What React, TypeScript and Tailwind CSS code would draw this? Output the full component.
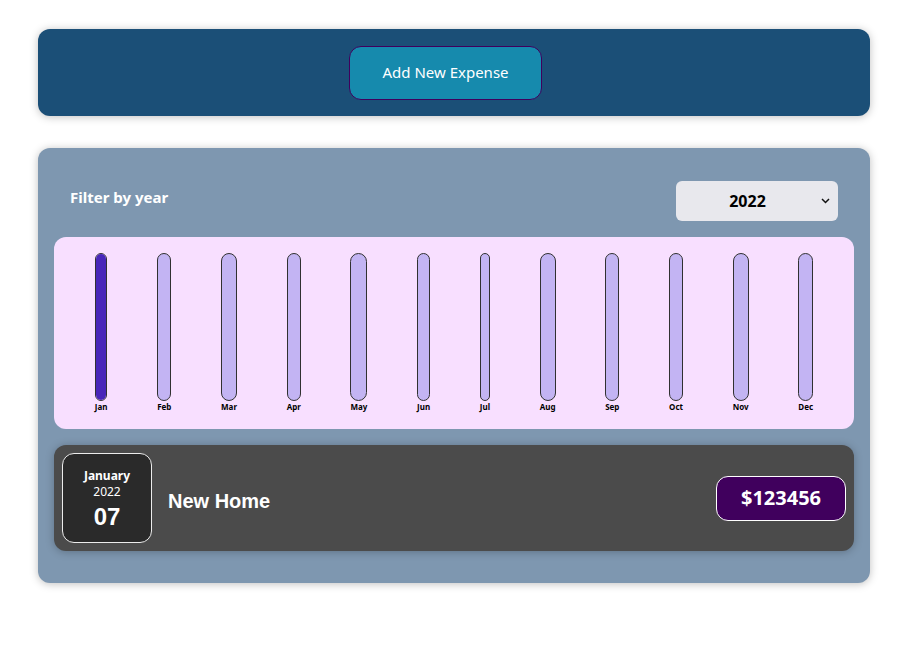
import React from "react";

const months = ["Jan","Feb","Mar","Apr","May","Jun","Jul","Aug","Sep","Oct","Nov","Dec"];

export default function App() {
  return (
    <div className="min-h-[666px] bg-white pt-[29px] font-['Noto_Sans','Open_Sans',sans-serif]">
      <div className="ml-[38px] flex h-[87px] w-[832px] items-center justify-center rounded-[12px] bg-[#1b4f77] shadow-[0_1px_8px_rgba(0,0,0,0.25)]">
        <button className="mr-[17px] h-[54px] w-[193px] rounded-[12px] border border-[#40005d] bg-[#168aad] text-[15px] text-white">
          Add New Expense
        </button>
      </div>

      <div className="ml-[38px] mt-[32px] w-[832px] rounded-[12px] bg-[#7e97b0] p-4 shadow-[0_1px_8px_rgba(0,0,0,0.25)]">
        <div className="mb-4 mt-[17px] flex items-center justify-between px-4 text-white">
          <span className="mb-2 text-[15px] font-bold">Filter by year</span>
          <div className="relative flex h-[40px] w-[162px] items-center justify-center rounded-[6px] bg-[#e8e8ed] text-[16px] font-bold text-black">
            <span className="-ml-[19px]">2022</span>
            <svg className="absolute right-[8px] top-[17px]" width="9" height="6" viewBox="0 0 9 6">
              <path d="M1 1 L4.5 4.5 L8 1" fill="none" stroke="#111" strokeWidth="1.5" />
            </svg>
          </div>
        </div>

        <div className="flex h-[192px] justify-around rounded-[12px] bg-[#f8dfff] p-4">
          {months.map((m, i) => (
            <div key={m} className="flex h-full flex-col items-center">
              <div className="flex w-full flex-1 flex-col justify-end overflow-hidden rounded-[12px] border border-[#313131] bg-[#c3b4f3]">
                {i === 0 && <div className="h-full w-full bg-[#4826b9]" />}
              </div>
              <div className="text-[8px] font-bold leading-[12px] text-black">{m}</div>
            </div>
          ))}
        </div>

        <div className="my-4 flex items-center justify-between rounded-[12px] bg-[#4b4b4b] p-2 shadow-[0_1px_8px_rgba(0,0,0,0.25)]">
          <div className="flex items-center gap-4">
            <div className="flex h-[90px] w-[90px] flex-col items-center justify-center rounded-[12px] border border-[#ececec] bg-[#2a2a2a] pt-[6px] text-white">
              <div className="text-[12px] font-bold leading-[16px]">January</div>
              <div className="text-[12px] leading-[16px]">2022</div>
              <div className="font-['Liberation_Sans',sans-serif] text-[24px] font-bold leading-[34px]">07</div>
            </div>
            <h2 className="mt-[5px] font-['Liberation_Sans',sans-serif] text-[20px] font-bold text-white">New Home</h2>
          </div>
          <div className="flex h-[45px] w-[130px] items-center justify-center rounded-[12px] border border-white bg-[#40005d] text-[20px] font-bold text-white">
            $123456
          </div>
        </div>
      </div>
    </div>
  );
}
